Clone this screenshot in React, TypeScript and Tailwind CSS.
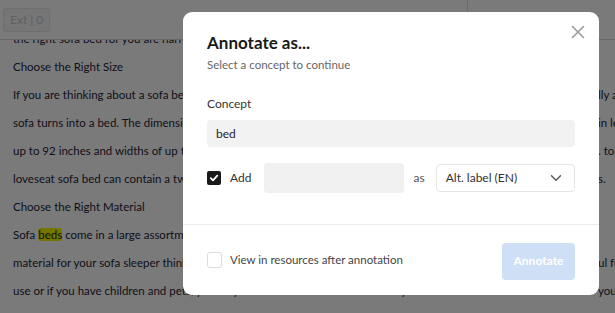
import React from "react";

const lines: { left: React.ReactNode; right?: string }[] = [
  { left: "the right sofa bed for you are narrow, medium and wide choices" },
  { left: "Choose the Right Size" },
  { left: "If you are thinking about a sofa bed for your home, think about how much space you will need when the", right: "lly a" },
  { left: "sofa turns into a bed. The dimensions of a full-size sleeper sofa depend on the frame, and can come", right: "in le" },
  { left: "up to 92 inches and widths of up to 40 inches, while smaller sofas are better suited to tight spaces", right: ". to" },
  { left: "loveseat sofa bed can contain a twin mattress and is perfect for smaller apartments and guest room", right: "s." },
  { left: "Choose the Right Material" },
  {
    left: (
      <>
        Sofa <span className="rounded-[3px] bg-[#f4f400]">beds</span> come in a large assortment of fabrics and finishes, so think about what is most useful
      </>
    ),
  },
  { left: "material for your sofa sleeper think about how often it will be used and whether it is meant for da", right: "ul for" },
  { left: "use or if you have children and pets, you may want a durable fabric that is easy to clean for", right: "your" },
];

export default function App() {
  return (
    <div className="relative w-[615px] h-[313px] overflow-hidden bg-white font-['Lato',sans-serif]">
      {/* top bar */}
      <div className="flex h-[40px] items-center border-b border-[#d8d8d8]">
        <div className="ml-[3px] flex h-[24px] items-center rounded-[3px] border border-[#e6e6e6] bg-[#f7f7f7] px-[6px] text-[12px] text-[#c8c8c8]">
          Ext | 0
        </div>
        <div className="ml-auto h-full w-[148px] border-l border-[#e0e0e0]" />
      </div>
      {/* text content */}
      <div className="h-[273px] overflow-hidden">
        <div className="-mt-[15px] text-[11.5px] leading-[28px] text-[#25253a]">
          {lines.map((l, i) => (
            <div key={i} className="grid grid-cols-[585px_auto] whitespace-nowrap pl-[13px]">
              <div className="overflow-hidden">{l.left}</div>
              <div>{l.right ?? ""}</div>
            </div>
          ))}
        </div>
      </div>
      {/* overlay */}
      <div className="absolute inset-0 bg-[rgba(0,0,0,0.52)]" />
      {/* modal */}
      <div className="absolute left-[183px] top-[12px] flex h-[283px] w-[416px] flex-col rounded-[9px] bg-white">
        <div className="relative px-[24px] pt-[20px]">
          <button className="absolute right-[14px] top-[13px] text-[#9a9a9a]">
            <svg width="14" height="14" viewBox="0 0 14 14" fill="none" stroke="currentColor" strokeWidth="1.6" strokeLinecap="round">
              <path d="M1.5 1.5L12.5 12.5M12.5 1.5L1.5 12.5" />
            </svg>
          </button>
          <div className="text-[17px] font-bold leading-[22px] text-[#1a1a1a]">Annotate as...</div>
          <div className="mt-[3px] text-[11.5px] leading-[16px] text-[#666]">Select a concept to continue</div>
          <div className="mt-[23px] text-[12px] leading-[16px] text-[#333]">Concept</div>
          <div className="mt-[8px] flex h-[27px] items-center rounded-[4px] bg-[#f2f2f2] px-[9px] text-[12px] text-[#1e1e2e]">
            bed
          </div>
          <div className="mt-[16px] flex h-[30px] items-center">
            <div className="flex h-[14px] w-[14px] items-center justify-center rounded-[2px] bg-[#1a1a1a]">
              <svg width="10" height="10" viewBox="0 0 10 10" fill="none" stroke="white" strokeWidth="1.8" strokeLinecap="round" strokeLinejoin="round">
                <path d="M1.8 5.2L4 7.4L8.3 2.6" />
              </svg>
            </div>
            <span className="ml-[9px] text-[12px] text-[#333]">Add</span>
            <div className="ml-[13px] h-[30px] w-[140px] rounded-[4px] bg-[#f0f0f0]" />
            <span className="ml-[10px] text-[12px] text-[#555]">as</span>
            <div className="ml-[11px] flex h-[28px] w-[140px] items-center justify-between rounded-[4px] border border-[#e6e6e6] pl-[9px] pr-[12px] text-[12px] text-[#333]">
              <span>Alt. label (EN)</span>
              <svg width="12" height="8" viewBox="0 0 12 8" fill="none" stroke="#555" strokeWidth="1.4" strokeLinecap="round" strokeLinejoin="round">
                <path d="M1.5 1.8L6 6.2L10.5 1.8" />
              </svg>
            </div>
          </div>
        </div>
        <div className="mt-[31px] border-t border-[#ececec]" />
        <div className="flex flex-1 items-center px-[24px]">
          <div className="h-[16px] w-[15px] rounded-[3px] border border-[#dcdcdc]" />
          <span className="ml-[8px] text-[11.5px] text-[#444]">View in resources after annotation</span>
          <button className="ml-auto mt-[2px] h-[37px] w-[73px] rounded-[4px] bg-[#cfe0f6] text-[12px] font-bold text-white">
            Annotate
          </button>
        </div>
      </div>
    </div>
  );
}
